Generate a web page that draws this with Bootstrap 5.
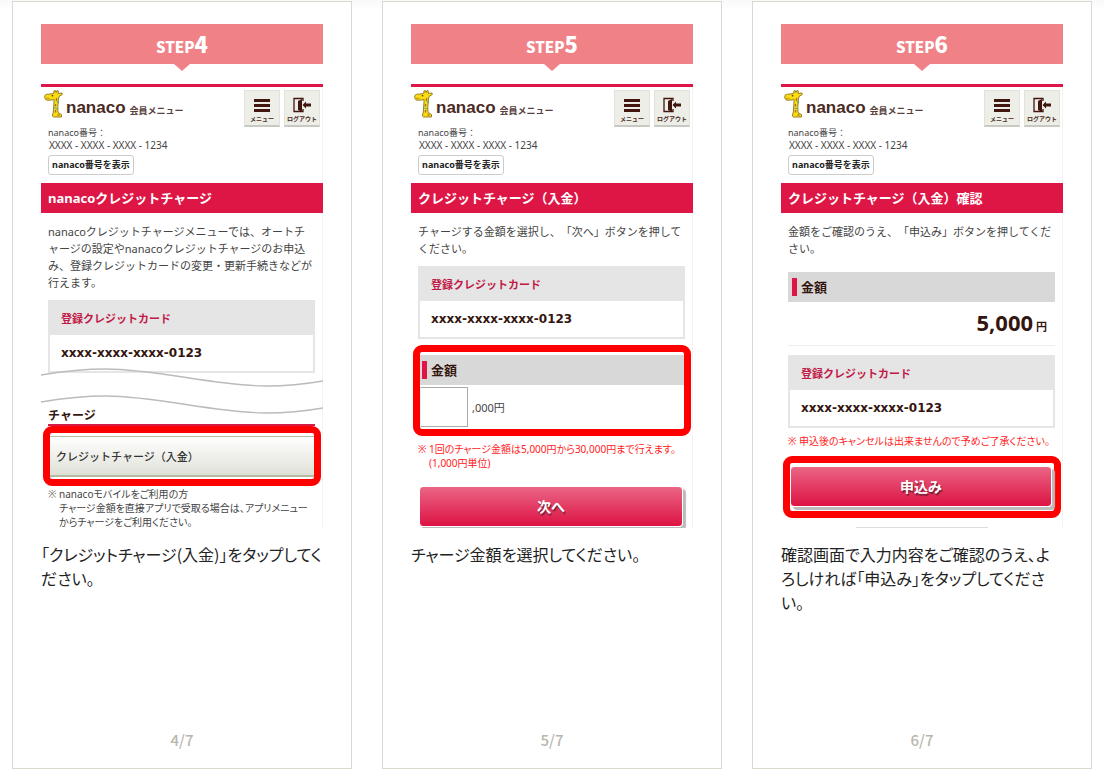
<!DOCTYPE html>
<html lang="ja">
<head>
<meta charset="utf-8">
<meta name="viewport" content="width=device-width, initial-scale=1">
<title>nanacoクレジットチャージ 手順</title>
<link href="https://cdn.jsdelivr.net/npm/bootstrap@5.3.0/dist/css/bootstrap.min.css" rel="stylesheet">
<style>
:root{--crimson:#de1645;--brown:#4a2a22}
body{font-family:"Noto Sans CJK JP",sans-serif;color:#222;background:linear-gradient(#f9f9f9,#fff 10px) no-repeat #fff}
.steps{display:grid;grid-template-columns:repeat(auto-fit,minmax(300px,1fr));gap:30px;padding:1px 12px 7px}
.step{min-height:calc(100vh - 8px);border:1px solid #d9d9cf;background:#fff;padding:22px 28px 16px}
.step-title{height:40px;margin:0 0 20px;background:#f08287;color:#fff;font-size:15px;font-weight:900;line-height:38px;text-align:center;position:relative}
.step-title span{font-size:22px}
.step-title::after{content:"";position:absolute;top:100%;left:50%;margin-left:-8px;border:8px solid transparent;border-top:7px solid #f08287;border-bottom:0}
.caption-text{font-size:16px;line-height:24px;font-feature-settings:"palt";margin:14px 0 0}
.pager{font-size:15px;line-height:24px;font-weight:500;color:#b7b7ae}
/* phone screen */
.screen{height:444px;overflow:hidden;border-top:3px solid var(--crimson);box-shadow:inset -1px 0 #f3f3f3;font-family:"Noto Sans","Noto Sans CJK JP",sans-serif;text-spacing-trim:space-all;color:#444;font-size:11px;line-height:17px}
.screen button,.screen input{font-family:inherit}
.screen-head{height:96px;padding:3px 3px 0}
.brand-row{height:37px}
.giraffe{width:21px;height:28px}
.wordmark{font-family:"Liberation Sans",sans-serif;font-weight:700;font-size:17px;line-height:24px;color:var(--brown);margin:6px 0 0 1px}
.brand-sub{font-size:9px;line-height:12px;font-weight:700;color:#57413c;margin:15px 0 0 4px}
.tool{width:36px;height:37px;padding:3px 0 0;border:1px solid #e2e1da;border-bottom:2px solid #c9c9c4;background:#eeeee8;color:var(--brown);font-size:6px;line-height:8px;font-weight:700;text-align:center}
.tool svg{display:block;width:22px;height:18px;margin:0 auto}
.number-label{font-size:9px;line-height:12px;padding-left:4px}
.number-value{font-size:10px;line-height:12px;padding-left:5px}
.show-number{height:20px;width:86px;margin:4px 0 0 4px;padding:0;border:1px solid #ccc;border-radius:3px;background:#fff;color:#222;font-size:9px;line-height:16px;font-weight:700;display:block}
.band{background:var(--crimson);color:#fff;font-size:13px;line-height:30px;font-weight:700;padding:0 7px;margin:0}
.inner{padding:10px 8px 0 7px}
.inner p{margin:0}
.card-table{width:100%;border:2px solid #e5e5e5;margin:9px 0 0}
.card-table th{background:#e5e5e5;color:#c11a48;font-weight:600;height:34px;padding:0 11px}
.card-table td{font-family:"DejaVu Sans",sans-serif;font-size:12px;font-weight:700;color:#33160f;height:37px;padding:1px 11px 0}
.wave{display:block;width:100%;height:50px;margin:-7px 0 -8px;position:relative}
.group-title{font-size:12px;line-height:16px;font-weight:700;color:#33160f;border-bottom:2px solid #d51a44;margin:0 8px 0 7px}
.focus-box{border:7px solid #f00;border-radius:9px;margin:0 2px;padding:3px 0 2px}
.menu-item{display:block;width:100%;height:41px;border:solid #b6bca6;border-width:1px 0 2px;background:linear-gradient(#fff,#dfe1d7);color:#333;font-size:11px;font-weight:500;text-align:left;padding:0 6px}
.notes{list-style:none;margin:0;padding:1px 7px 0 18px;font-size:10px;line-height:14px;font-feature-settings:"palt"}
.notes li::before{content:"※";display:inline-block;width:11px;margin-left:-11px;color:#777}
.notes.alert-note{padding-top:6px}
.notes.alert-note,.notes.alert-note li::before{color:#f22}
.amount-box{margin-top:6px}
.amount-title{height:30px;margin:0;background:#d8d8d8;color:#33160f;font-size:13px;line-height:26px;font-weight:700;padding-left:2px;display:flex;align-items:center;gap:4px}
.amount-title::before{content:"";width:5px;height:18px;background:var(--crimson)}
.confirm-title{margin-top:15px;padding-left:4px}
.amount-row{padding-top:2px}
.amount-input{width:48px;height:40px;border:1px solid #aaa;border-left-color:#eee;border-radius:0;background:#fff}
.go{display:block;height:41px;border:1px solid #fff;border-radius:4px;background:linear-gradient(#ea6585,#dd1344);box-shadow:3px 3px 1px #bbb;color:#fff;font-size:14px;font-weight:700;text-shadow:1px 2px 1px #7a2035;padding:0 0 1px;width:calc(100% - 2px);margin-bottom:2px}
.total{height:44px;line-height:41px;border-bottom:1px solid #eee;padding-right:8px;color:#33160f;font-weight:700;text-align:right}
.total b{font-size:22px;font-weight:700}
.next-edge{width:132px;margin:9px auto 0;border-top:1px solid #ddd}
</style>
</head>
<body>
<svg class="d-none" aria-hidden="true">
  <symbol id="giraffe" viewBox="0 0 21 28">
    <path d="M1 5.500C1 4.500 3 4 5 4.200L9 3.500l1-.5L9.800 1l1.500-.5.7 2 1-2 1.300.4-.1 2.600L18 3l.3 1.500-3.300 2L14.500 9l-.7 8 .2 5.500 3.500 2V27H9.500L8.300 26l1-4L10 12V9.500L8 10l-5 .2C1 10 .3 7.500 1 5.500z" fill="#fbdc10" stroke="#8c7420" stroke-width=".9" stroke-linejoin="round"/>
    <path d="M12.500 8v3M11.500 14v2.500M11.500 20v2.500M13.500 25h2" stroke="#a67823" stroke-width="1.400"/>
    <path d="m13 11.500 2 1.500M10.500 18l3 1" stroke="#55a7a0" stroke-width="1.200"/>
    <circle cx="8.500" cy="5.800" r=".8" fill="#40221b"/>
    <path d="M2 8.300h3.500" stroke="#8c7420" stroke-width=".6"/>
  </symbol>
  <symbol id="bars" viewBox="0 0 22 18"><path d="M3 3.500h16M3 8.500h16M3 13.500h16" stroke="#40160f" stroke-width="3"/></symbol>
  <symbol id="exit" viewBox="0 0 22 18">
    <path d="M12 4V1.500H3v13h9V12" fill="none" stroke="#40160f" stroke-width="1.300"/>
    <path d="M7 4l4-2v13l-4-2z" fill="#40160f"/>
    <path d="M11.500 8 15 4.500v2h5v3h-5v2z" fill="#40160f"/>
  </symbol>
</svg>

<main class="steps">
  <section class="step d-flex flex-column">
    <h2 class="step-title">STEP<span>4</span></h2>
    <div class="screen">
      <div class="screen-head">
        <div class="brand-row d-flex align-items-start">
          <svg class="giraffe" aria-hidden="true"><use href="#giraffe"/></svg>
          <span class="wordmark">nanaco</span><span class="brand-sub">会員メニュー</span>
          <div class="d-flex ms-auto gap-1">
            <button type="button" class="tool"><svg aria-hidden="true"><use href="#bars"/></svg>メニュー</button>
            <button type="button" class="tool"><svg aria-hidden="true"><use href="#exit"/></svg>ログアウト</button>
          </div>
        </div>
        <div class="number-label">nanaco番号：</div>
        <div class="number-value">XXXX - XXXX - XXXX - 1234</div>
        <button type="button" class="show-number">nanaco番号を表示</button>
      </div>
      <h3 class="band">nanacoクレジットチャージ</h3>
      <div class="inner">
        <p>nanacoクレジットチャージメニューでは、オートチャージの設定やnanacoクレジットチャージのお申込み、登録クレジットカードの変更・更新手続きなどが行えます。</p>
        <table class="card-table"><tr><th scope="col">登録クレジットカード</th></tr><tr><td>xxxx-xxxx-xxxx-0123</td></tr></table>
      </div>
      <svg class="wave" viewBox="0 0 282 50" preserveAspectRatio="none" fill="none" stroke="#bbb" stroke-width="1.300" aria-hidden="true">
        <path d="M0 9C30 4 50 3 65 3c50 0 110 17 160 17 20 0 40-2 57-5M0 36c30-5 50-6 65-6 50 0 110 17 160 17 20 0 40-2 57-5"/>
      </svg>
      <h4 class="group-title">チャージ</h4>
      <div class="focus-box"><button type="button" class="menu-item">クレジットチャージ（入金）</button></div>
      <ul class="notes"><li>nanacoモバイルをご利用の方<br>チャージ金額を直接アプリで受取る場合は、アプリメニューからチャージをご利用ください。</li></ul>
    </div>
    <p class="caption-text">「クレジットチャージ(入金)」をタップしてください。</p>
    <div class="pager mt-auto text-center">4/7</div>
  </section>

  <section class="step d-flex flex-column">
    <h2 class="step-title">STEP<span>5</span></h2>
    <div class="screen">
      <div class="screen-head">
        <div class="brand-row d-flex align-items-start">
          <svg class="giraffe" aria-hidden="true"><use href="#giraffe"/></svg>
          <span class="wordmark">nanaco</span><span class="brand-sub">会員メニュー</span>
          <div class="d-flex ms-auto gap-1">
            <button type="button" class="tool"><svg aria-hidden="true"><use href="#bars"/></svg>メニュー</button>
            <button type="button" class="tool"><svg aria-hidden="true"><use href="#exit"/></svg>ログアウト</button>
          </div>
        </div>
        <div class="number-label">nanaco番号：</div>
        <div class="number-value">XXXX - XXXX - XXXX - 1234</div>
        <button type="button" class="show-number">nanaco番号を表示</button>
      </div>
      <h3 class="band">クレジットチャージ（入金）</h3>
      <div class="inner">
        <p>チャージする金額を選択し、「次へ」ボタンを押してください。</p>
        <table class="card-table"><tr><th scope="col">登録クレジットカード</th></tr><tr><td>xxxx-xxxx-xxxx-0123</td></tr></table>
      </div>
      <div class="focus-box amount-box">
        <h4 class="amount-title"><label for="amount">金額</label></h4>
        <div class="amount-row d-flex align-items-center gap-1"><input id="amount" class="amount-input" type="text" inputmode="numeric"><span>,000円</span></div>
      </div>
      <ul class="notes alert-note"><li>1回のチャージ金額は5,000円から30,000円まで行えます。<br>(1,000円単位)</li></ul>
      <div class="px-2 pt-3"><button type="button" class="go">次へ</button></div>
    </div>
    <p class="caption-text">チャージ金額を選択してください。</p>
    <div class="pager mt-auto text-center">5/7</div>
  </section>

  <section class="step d-flex flex-column">
    <h2 class="step-title">STEP<span>6</span></h2>
    <div class="screen">
      <div class="screen-head">
        <div class="brand-row d-flex align-items-start">
          <svg class="giraffe" aria-hidden="true"><use href="#giraffe"/></svg>
          <span class="wordmark">nanaco</span><span class="brand-sub">会員メニュー</span>
          <div class="d-flex ms-auto gap-1">
            <button type="button" class="tool"><svg aria-hidden="true"><use href="#bars"/></svg>メニュー</button>
            <button type="button" class="tool"><svg aria-hidden="true"><use href="#exit"/></svg>ログアウト</button>
          </div>
        </div>
        <div class="number-label">nanaco番号：</div>
        <div class="number-value">XXXX - XXXX - XXXX - 1234</div>
        <button type="button" class="show-number">nanaco番号を表示</button>
      </div>
      <h3 class="band">クレジットチャージ（入金）確認</h3>
      <div class="inner">
        <p>金額をご確認のうえ、「申込み」ボタンを押してください。</p>
        <h4 class="amount-title confirm-title">金額</h4>
        <div class="total"><b>5,000</b> 円</div>
        <table class="card-table"><tr><th scope="col">登録クレジットカード</th></tr><tr><td>xxxx-xxxx-xxxx-0123</td></tr></table>
      </div>
      <ul class="notes alert-note pb-2"><li>申込後のキャンセルは出来ませんので予めご了承ください。</li></ul>
      <div class="focus-box"><button type="button" class="go">申込み</button></div>
      <div class="next-edge"></div>
    </div>
    <p class="caption-text">確認画面で入力内容をご確認のうえ、よろしければ「申込み」をタップしてください。</p>
    <div class="pager mt-auto text-center">6/7</div>
  </section>
</main>
<script src="https://cdn.jsdelivr.net/npm/bootstrap@5.3.0/dist/js/bootstrap.bundle.min.js"></script>
</body>
</html>
